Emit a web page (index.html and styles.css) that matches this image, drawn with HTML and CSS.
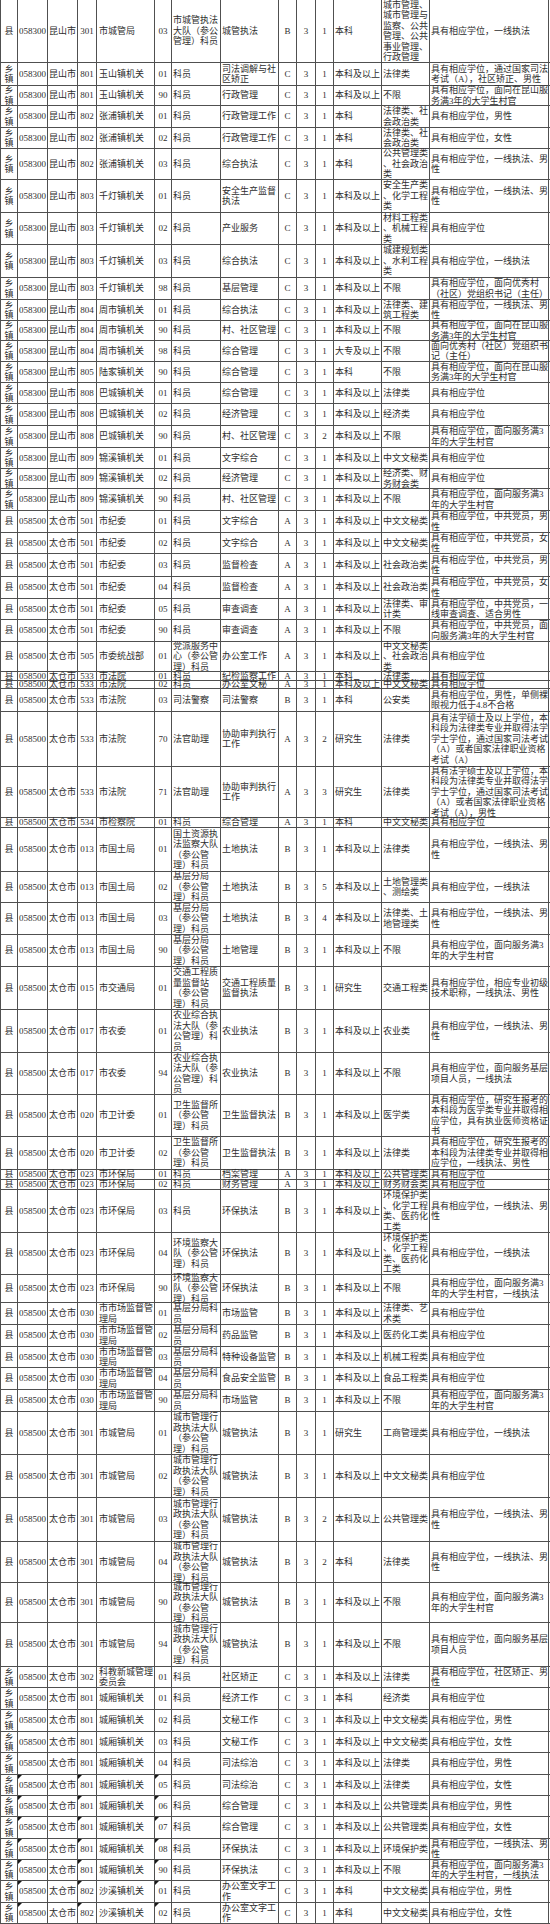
FILE: index.html
```html
<!DOCTYPE html>
<html lang="zh-CN">
<head>
<meta charset="utf-8">
<title>职位表</title>
<link rel="stylesheet" href="styles.css">
</head>
<body>
<div class="sheet">
<div class="r h63"><span>县</span><span>058300</span><span>昆山市</span><span>301</span><span>市城管局</span><span>03</span><span>市城管执法<br>大队（参公<br>管理）科员</span><span>城管执法</span><span>B</span><span>3</span><span>1</span><span>本科</span><span>城市管理、<br>城市管理与<br>监察、公共<br>管理、公共<br>事业管理、<br>行政管理</span><span>具有相应学位，一线执法</span></div>
<div class="r h23"><span>乡<br>镇</span><span>058300</span><span>昆山市</span><span>801</span><span>玉山镇机关</span><span>01</span><span>科员</span><span>司法调解与社<br>区矫正</span><span>C</span><span>3</span><span>1</span><span>本科及以上</span><span>法律类</span><span>具有相应学位，通过国家司法<br>考试（A），社区矫正、男性</span></div>
<div class="r h20"><span>乡<br>镇</span><span>058300</span><span>昆山市</span><span>801</span><span>玉山镇机关</span><span>90</span><span>科员</span><span>行政管理</span><span>C</span><span>3</span><span>1</span><span>本科及以上</span><span>不限</span><span>具有相应学位，面向在昆山服<br>务满3年的大学生村官</span></div>
<div class="r h22"><span>乡<br>镇</span><span>058300</span><span>昆山市</span><span>802</span><span>张浦镇机关</span><span>01</span><span>科员</span><span>行政管理工作</span><span>C</span><span>3</span><span>1</span><span>本科</span><span>法律类、社<br>会政治类</span><span>具有相应学位，男性</span></div>
<div class="r h21"><span>乡<br>镇</span><span>058300</span><span>昆山市</span><span>802</span><span>张浦镇机关</span><span>02</span><span>科员</span><span>行政管理工作</span><span>C</span><span>3</span><span>1</span><span>本科</span><span>法律类、社<br>会政治类</span><span>具有相应学位，女性</span></div>
<div class="r h31"><span>乡<br>镇</span><span>058300</span><span>昆山市</span><span>802</span><span>张浦镇机关</span><span>03</span><span>科员</span><span>综合执法</span><span>C</span><span>3</span><span>1</span><span>本科</span><span>公共管理类<br>、社会政治<br>类</span><span>具有相应学位，一线执法、男<br>性</span></div>
<div class="r h33"><span>乡<br>镇</span><span>058300</span><span>昆山市</span><span>803</span><span>千灯镇机关</span><span>01</span><span>科员</span><span>安全生产监督<br>执法</span><span>C</span><span>3</span><span>1</span><span>本科及以上</span><span>安全生产类<br>、化学工程<br>类</span><span>具有相应学位，一线执法、男<br>性</span></div>
<div class="r h32"><span>乡<br>镇</span><span>058300</span><span>昆山市</span><span>803</span><span>千灯镇机关</span><span>02</span><span>科员</span><span>产业服务</span><span>C</span><span>3</span><span>1</span><span>本科及以上</span><span>材料工程类<br>、机械工程<br>类</span><span>具有相应学位</span></div>
<div class="r h33"><span>乡<br>镇</span><span>058300</span><span>昆山市</span><span>803</span><span>千灯镇机关</span><span>03</span><span>科员</span><span>综合执法</span><span>C</span><span>3</span><span>1</span><span>本科及以上</span><span>城建规划类<br>、水利工程<br>类</span><span>具有相应学位，一线执法</span></div>
<div class="r h22"><span>乡<br>镇</span><span>058300</span><span>昆山市</span><span>803</span><span>千灯镇机关</span><span>98</span><span>科员</span><span>基层管理</span><span>C</span><span>3</span><span>1</span><span>本科及以上</span><span>不限</span><span>具有相应学位，面向优秀村<br>（社区）党组织书记（主任）</span></div>
<div class="r h21"><span>乡<br>镇</span><span>058300</span><span>昆山市</span><span>804</span><span>周市镇机关</span><span>01</span><span>科员</span><span>综合执法</span><span>C</span><span>3</span><span>1</span><span>本科及以上</span><span>法律类、建<br>筑工程类</span><span>具有相应学位，一线执法、男<br>性</span></div>
<div class="r h20"><span>乡<br>镇</span><span>058300</span><span>昆山市</span><span>804</span><span>周市镇机关</span><span>90</span><span>科员</span><span>村、社区管理</span><span>C</span><span>3</span><span>1</span><span>本科及以上</span><span>不限</span><span>具有相应学位，面向在昆山服<br>务满3年的大学生村官</span></div>
<div class="r h21"><span>乡<br>镇</span><span>058300</span><span>昆山市</span><span>804</span><span>周市镇机关</span><span>98</span><span>科员</span><span>综合管理</span><span>C</span><span>3</span><span>1</span><span>大专及以上</span><span>不限</span><span>面向优秀村（社区）党组织书<br>记（主任）</span></div>
<div class="r h21"><span>乡<br>镇</span><span>058300</span><span>昆山市</span><span>805</span><span>陆家镇机关</span><span>90</span><span>科员</span><span>综合管理</span><span>C</span><span>3</span><span>1</span><span>本科</span><span>不限</span><span>具有相应学位，面向在昆山服<br>务满3年的大学生村官</span></div>
<div class="r h21"><span>乡<br>镇</span><span>058300</span><span>昆山市</span><span>808</span><span>巴城镇机关</span><span>01</span><span>科员</span><span>综合管理</span><span>C</span><span>3</span><span>1</span><span>本科及以上</span><span>法律类</span><span>具有相应学位</span></div>
<div class="r h22"><span>乡<br>镇</span><span>058300</span><span>昆山市</span><span>808</span><span>巴城镇机关</span><span>02</span><span>科员</span><span>经济管理</span><span>C</span><span>3</span><span>1</span><span>本科及以上</span><span>经济类</span><span>具有相应学位</span></div>
<div class="r h22"><span>乡<br>镇</span><span>058300</span><span>昆山市</span><span>808</span><span>巴城镇机关</span><span>90</span><span>科员</span><span>村、社区管理</span><span>C</span><span>3</span><span>2</span><span>本科及以上</span><span>不限</span><span>具有相应学位，面向服务满3<br>年的大学生村官</span></div>
<div class="r h21"><span>乡<br>镇</span><span>058300</span><span>昆山市</span><span>809</span><span>锦溪镇机关</span><span>01</span><span>科员</span><span>文字综合</span><span>C</span><span>3</span><span>1</span><span>本科及以上</span><span>中文文秘类</span><span>具有相应学位</span></div>
<div class="r h20"><span>乡<br>镇</span><span>058300</span><span>昆山市</span><span>809</span><span>锦溪镇机关</span><span>02</span><span>科员</span><span>经济管理</span><span>C</span><span>3</span><span>1</span><span>本科及以上</span><span>经济类、财<br>务财会类</span><span>具有相应学位</span></div>
<div class="r h22"><span>乡<br>镇</span><span>058300</span><span>昆山市</span><span>809</span><span>锦溪镇机关</span><span>90</span><span>科员</span><span>村、社区管理</span><span>C</span><span>3</span><span>1</span><span>本科及以上</span><span>不限</span><span>具有相应学位，面向服务满3<br>年的大学生村官</span></div>
<div class="r h22"><span>县</span><span>058500</span><span>太仓市</span><span>501</span><span>市纪委</span><span>01</span><span>科员</span><span>文字综合</span><span>A</span><span>3</span><span>1</span><span>本科及以上</span><span>中文文秘类</span><span>具有相应学位，中共党员，男<br>性</span></div>
<div class="r h21"><span>县</span><span>058500</span><span>太仓市</span><span>501</span><span>市纪委</span><span>02</span><span>科员</span><span>文字综合</span><span>A</span><span>3</span><span>1</span><span>本科及以上</span><span>中文文秘类</span><span>具有相应学位，中共党员，女<br>性</span></div>
<div class="r h23"><span>县</span><span>058500</span><span>太仓市</span><span>501</span><span>市纪委</span><span>03</span><span>科员</span><span>监督检查</span><span>A</span><span>3</span><span>1</span><span>本科及以上</span><span>社会政治类</span><span>具有相应学位，中共党员，男<br>性</span></div>
<div class="r h22"><span>县</span><span>058500</span><span>太仓市</span><span>501</span><span>市纪委</span><span>04</span><span>科员</span><span>监督检查</span><span>A</span><span>3</span><span>1</span><span>本科及以上</span><span>社会政治类</span><span>具有相应学位，中共党员，女<br>性</span></div>
<div class="r h21"><span>县</span><span>058500</span><span>太仓市</span><span>501</span><span>市纪委</span><span>05</span><span>科员</span><span>审查调查</span><span>A</span><span>3</span><span>1</span><span>本科及以上</span><span>法律类、审<br>计类</span><span>具有相应学位，中共党员，一<br>线审查调查、适合男性</span></div>
<div class="r h22"><span>县</span><span>058500</span><span>太仓市</span><span>501</span><span>市纪委</span><span>90</span><span>科员</span><span>审查调查</span><span>A</span><span>3</span><span>1</span><span>本科及以上</span><span>不限</span><span>具有相应学位，中共党员，面<br>向服务满3年的大学生村官</span></div>
<div class="r h30"><span>县</span><span>058500</span><span>太仓市</span><span>505</span><span>市委统战部</span><span>01</span><span>党派服务中<br>心（参公管<br>理）科员</span><span>办公室工作</span><span>A</span><span>3</span><span>1</span><span>本科及以上</span><span>中文文秘类<br>、社会政治<br>类</span><span>具有相应学位</span></div>
<div class="r h9"><span>县</span><span>058500</span><span>太仓市</span><span>533</span><span>市法院</span><span>01</span><span>科员</span><span>纪检监察工作</span><span>A</span><span>3</span><span>1</span><span>本科</span><span>法律类</span><span>具有相应学位</span></div>
<div class="r h8"><span>县</span><span>058500</span><span>太仓市</span><span>533</span><span>市法院</span><span>02</span><span>科员</span><span>办公室文秘</span><span>A</span><span>3</span><span>1</span><span>本科及以上</span><span>中文文秘类</span><span>具有相应学位</span></div>
<div class="r h23"><span>县</span><span>058500</span><span>太仓市</span><span>533</span><span>市法院</span><span>03</span><span>司法警察</span><span>司法警察</span><span>B</span><span>3</span><span>1</span><span>本科</span><span>公安类</span><span>具有相应学位，男性，单侧裸<br>眼视力低于4.8不合格</span></div>
<div class="r h55"><span>县</span><span>058500</span><span>太仓市</span><span>533</span><span>市法院</span><span>70</span><span>法官助理</span><span>协助审判执行<br>工作</span><span>A</span><span>3</span><span>2</span><span>研究生</span><span>法律类</span><span>具有法学硕士及以上学位，本<br>科段为法律类专业并取得法学<br>学士学位，通过国家司法考试<br>（A）或者国家法律职业资格<br>考试（A）</span></div>
<div class="r h51"><span>县</span><span>058500</span><span>太仓市</span><span>533</span><span>市法院</span><span>71</span><span>法官助理</span><span>协助审判执行<br>工作</span><span>A</span><span>3</span><span>3</span><span>研究生</span><span>法律类</span><span>具有法学硕士及以上学位，本<br>科段为法律类专业并取得法学<br>学士学位，通过国家司法考试<br>（A）或者国家法律职业资格<br>考试（A），男性</span></div>
<div class="r h10"><span>县</span><span>058500</span><span>太仓市</span><span>534</span><span>市检察院</span><span>01</span><span>科员</span><span>综合管理</span><span>A</span><span>3</span><span>1</span><span>本科</span><span>中文文秘类</span><span>具有相应学位</span></div>
<div class="r h44"><span>县</span><span>058500</span><span>太仓市</span><span>013</span><span>市国土局</span><span>01</span><span>国土资源执<br>法监察大队<br>（参公管<br>理）科员</span><span>土地执法</span><span>B</span><span>3</span><span>1</span><span>本科及以上</span><span>法律类</span><span>具有相应学位，一线执法、男<br>性</span></div>
<div class="r h31"><span>县</span><span>058500</span><span>太仓市</span><span>013</span><span>市国土局</span><span>02</span><span>基层分局<br>（参公管<br>理）科员</span><span>土地执法</span><span>B</span><span>3</span><span>5</span><span>本科及以上</span><span>土地管理类<br>、测绘类</span><span>具有相应学位，一线执法</span></div>
<div class="r h32"><span>县</span><span>058500</span><span>太仓市</span><span>013</span><span>市国土局</span><span>03</span><span>基层分局<br>（参公管<br>理）科员</span><span>土地执法</span><span>B</span><span>3</span><span>4</span><span>本科及以上</span><span>法律类、土<br>地管理类</span><span>具有相应学位，一线执法、男<br>性</span></div>
<div class="r h32"><span>县</span><span>058500</span><span>太仓市</span><span>013</span><span>市国土局</span><span>90</span><span>基层分局<br>（参公管<br>理）科员</span><span>土地管理</span><span>B</span><span>3</span><span>1</span><span>本科及以上</span><span>不限</span><span>具有相应学位，面向服务满3<br>年的大学生村官</span></div>
<div class="r h43"><span>县</span><span>058500</span><span>太仓市</span><span>015</span><span>市交通局</span><span>01</span><span>交通工程质<br>量监督站<br>（参公管<br>理）科员</span><span>交通工程质量<br>监督执法</span><span>B</span><span>3</span><span>1</span><span>研究生</span><span>交通工程类</span><span>具有相应学位，相应专业初级<br>技术职称，一线执法、男性</span></div>
<div class="r h43"><span>县</span><span>058500</span><span>太仓市</span><span>017</span><span>市农委</span><span>01</span><span>农业综合执<br>法大队（参<br>公管理）科<br>员</span><span>农业执法</span><span>B</span><span>3</span><span>1</span><span>本科及以上</span><span>农业类</span><span>具有相应学位，一线执法、男<br>性</span></div>
<div class="r h42"><span>县</span><span>058500</span><span>太仓市</span><span>017</span><span>市农委</span><span>94</span><span>农业综合执<br>法大队（参<br>公管理）科<br>员</span><span>农业执法</span><span>B</span><span>3</span><span>1</span><span>本科及以上</span><span>不限</span><span>具有相应学位，面向服务基层<br>项目人员，一线执法</span></div>
<div class="r h42"><span>县</span><span>058500</span><span>太仓市</span><span>020</span><span>市卫计委</span><span>01</span><span>卫生监督所<br>（参公管<br>理）科员</span><span>卫生监督执法</span><span>B</span><span>3</span><span>1</span><span>本科及以上</span><span>医学类</span><span>具有相应学位，研究生报考的<br>本科段为医学类专业并取得相<br>应学位，具有执业医师资格证<br>书</span></div>
<div class="r h33"><span>县</span><span>058500</span><span>太仓市</span><span>020</span><span>市卫计委</span><span>02</span><span>卫生监督所<br>（参公管<br>理）科员</span><span>卫生监督执法</span><span>B</span><span>3</span><span>1</span><span>本科及以上</span><span>法律类</span><span>具有相应学位，研究生报考的<br>本科段为法律类专业并取得相<br>应学位，一线执法、男性</span></div>
<div class="r h10"><span>县</span><span>058500</span><span>太仓市</span><span>023</span><span>市环保局</span><span>01</span><span>科员</span><span>档案管理</span><span>A</span><span>3</span><span>1</span><span>本科及以上</span><span>公共管理类</span><span>具有相应学位</span></div>
<div class="r h10"><span>县</span><span>058500</span><span>太仓市</span><span>023</span><span>市环保局</span><span>02</span><span>科员</span><span>财务管理</span><span>A</span><span>3</span><span>1</span><span>本科及以上</span><span>财务财会类</span><span>具有相应学位</span></div>
<div class="r h43"><span>县</span><span>058500</span><span>太仓市</span><span>023</span><span>市环保局</span><span>03</span><span>科员</span><span>环保执法</span><span>B</span><span>3</span><span>1</span><span>本科及以上</span><span>环境保护类<br>、化学工程<br>类、医药化<br>工类</span><span>具有相应学位，一线执法、男<br>性</span></div>
<div class="r h42"><span>县</span><span>058500</span><span>太仓市</span><span>023</span><span>市环保局</span><span>04</span><span>环境监察大<br>队（参公管<br>理）科员</span><span>环保执法</span><span>B</span><span>3</span><span>1</span><span>本科及以上</span><span>环境保护类<br>、化学工程<br>类、医药化<br>工类</span><span>具有相应学位，一线执法</span></div>
<div class="r h28"><span>县</span><span>058500</span><span>太仓市</span><span>023</span><span>市环保局</span><span>90</span><span>环境监察大<br>队（参公管<br>理）科员</span><span>环保执法</span><span>B</span><span>3</span><span>1</span><span>本科及以上</span><span>不限</span><span>具有相应学位，面向服务满3<br>年的大学生村官，一线执法</span></div>
<div class="r h22"><span>县</span><span>058500</span><span>太仓市</span><span>030</span><span>市市场监督管<br>理局</span><span>01</span><span>基层分局科<br>员</span><span>市场监管</span><span>B</span><span>3</span><span>1</span><span>本科及以上</span><span>法律类、艺<br>术类</span><span>具有相应学位</span></div>
<div class="r h22"><span>县</span><span>058500</span><span>太仓市</span><span>030</span><span>市市场监督管<br>理局</span><span>02</span><span>基层分局科<br>员</span><span>药品监管</span><span>B</span><span>3</span><span>1</span><span>本科及以上</span><span>医药化工类</span><span>具有相应学位</span></div>
<div class="r h21"><span>县</span><span>058500</span><span>太仓市</span><span>030</span><span>市市场监督管<br>理局</span><span>03</span><span>基层分局科<br>员</span><span>特种设备监管</span><span>B</span><span>3</span><span>1</span><span>本科及以上</span><span>机械工程类</span><span>具有相应学位</span></div>
<div class="r h22"><span>县</span><span>058500</span><span>太仓市</span><span>030</span><span>市市场监督管<br>理局</span><span>04</span><span>基层分局科<br>员</span><span>食品安全监管</span><span>B</span><span>3</span><span>1</span><span>本科及以上</span><span>食品工程类</span><span>具有相应学位</span></div>
<div class="r h22"><span>县</span><span>058500</span><span>太仓市</span><span>030</span><span>市市场监督管<br>理局</span><span>90</span><span>基层分局科<br>员</span><span>市场监管</span><span>B</span><span>3</span><span>1</span><span>本科及以上</span><span>不限</span><span>具有相应学位，面向服务满3<br>年的大学生村官</span></div>
<div class="r h43"><span>县</span><span>058500</span><span>太仓市</span><span>301</span><span>市城管局</span><span>01</span><span>城市管理行<br>政执法大队<br>（参公管<br>理）科员</span><span>城管执法</span><span>B</span><span>3</span><span>1</span><span>研究生</span><span>工商管理类</span><span>具有相应学位，一线执法</span></div>
<div class="r h43"><span>县</span><span>058500</span><span>太仓市</span><span>301</span><span>市城管局</span><span>02</span><span>城市管理行<br>政执法大队<br>（参公管<br>理）科员</span><span>城管执法</span><span>B</span><span>3</span><span>1</span><span>本科及以上</span><span>中文文秘类</span><span>具有相应学位</span></div>
<div class="r h44"><span>县</span><span>058500</span><span>太仓市</span><span>301</span><span>市城管局</span><span>03</span><span>城市管理行<br>政执法大队<br>（参公管<br>理）科员</span><span>城管执法</span><span>B</span><span>3</span><span>2</span><span>本科及以上</span><span>公共管理类</span><span>具有相应学位，一线执法、男<br>性</span></div>
<div class="r h41"><span>县</span><span>058500</span><span>太仓市</span><span>301</span><span>市城管局</span><span>04</span><span>城市管理行<br>政执法大队<br>（参公管<br>理）科员</span><span>城管执法</span><span>B</span><span>3</span><span>2</span><span>本科</span><span>法律类</span><span>具有相应学位，一线执法、男<br>性</span></div>
<div class="r h40"><span>县</span><span>058500</span><span>太仓市</span><span>301</span><span>市城管局</span><span>90</span><span>城市管理行<br>政执法大队<br>（参公管<br>理）科员</span><span>城管执法</span><span>B</span><span>3</span><span>1</span><span>本科及以上</span><span>不限</span><span>具有相应学位，面向服务满3<br>年的大学生村官</span></div>
<div class="r h44"><span>县</span><span>058500</span><span>太仓市</span><span>301</span><span>市城管局</span><span>94</span><span>城市管理行<br>政执法大队<br>（参公管<br>理）科员</span><span>城管执法</span><span>B</span><span>3</span><span>1</span><span>本科及以上</span><span>不限</span><span>具有相应学位，面向服务基层<br>项目人员</span></div>
<div class="r h21"><span>乡<br>镇</span><span>058500</span><span>太仓市</span><span>302</span><span>科教新城管理<br>委员会</span><span>01</span><span>科员</span><span>社区矫正</span><span>C</span><span>3</span><span>1</span><span>本科及以上</span><span>法律类</span><span>具有相应学位，社区矫正、男<br>性</span></div>
<div class="r h22"><span>乡<br>镇</span><span>058500</span><span>太仓市</span><span>801</span><span>城厢镇机关</span><span>01</span><span>科员</span><span>经济工作</span><span>C</span><span>3</span><span>1</span><span>本科</span><span>经济类</span><span>具有相应学位</span></div>
<div class="r h22"><span>乡<br>镇</span><span>058500</span><span>太仓市</span><span>801</span><span>城厢镇机关</span><span>02</span><span>科员</span><span>文秘工作</span><span>C</span><span>3</span><span>1</span><span>本科及以上</span><span>中文文秘类</span><span>具有相应学位，男性</span></div>
<div class="r h21"><span>乡<br>镇</span><span>058500</span><span>太仓市</span><span>801</span><span>城厢镇机关</span><span>03</span><span>科员</span><span>文秘工作</span><span>C</span><span>3</span><span>1</span><span>本科及以上</span><span>中文文秘类</span><span>具有相应学位，女性</span></div>
<div class="r h22"><span>乡<br>镇</span><span>058500</span><span>太仓市</span><span>801</span><span>城厢镇机关</span><span>04</span><span>科员</span><span>司法综治</span><span>C</span><span>3</span><span>1</span><span>本科及以上</span><span>法律类</span><span>具有相应学位，男性</span></div>
<div class="r h21 mk"><span>乡<br>镇</span><span>058500</span><span>太仓市</span><span>801</span><span>城厢镇机关</span><span>05</span><span>科员</span><span>司法综治</span><span>C</span><span>3</span><span>1</span><span>本科及以上</span><span>法律类</span><span>具有相应学位，女性</span></div>
<div class="r h21 mk"><span>乡<br>镇</span><span>058500</span><span>太仓市</span><span>801</span><span>城厢镇机关</span><span>06</span><span>科员</span><span>综合管理</span><span>C</span><span>3</span><span>1</span><span>本科及以上</span><span>公共管理类</span><span>具有相应学位，男性</span></div>
<div class="r h22 mk"><span>乡<br>镇</span><span>058500</span><span>太仓市</span><span>801</span><span>城厢镇机关</span><span>07</span><span>科员</span><span>综合管理</span><span>C</span><span>3</span><span>1</span><span>本科及以上</span><span>公共管理类</span><span>具有相应学位，女性</span></div>
<div class="r h21 mk"><span>乡<br>镇</span><span>058500</span><span>太仓市</span><span>801</span><span>城厢镇机关</span><span>08</span><span>科员</span><span>环保执法</span><span>C</span><span>3</span><span>1</span><span>本科及以上</span><span>环境保护类</span><span>具有相应学位，一线执法、男<br>性</span></div>
<div class="r h21 mk"><span>乡<br>镇</span><span>058500</span><span>太仓市</span><span>801</span><span>城厢镇机关</span><span>90</span><span>科员</span><span>环保执法</span><span>C</span><span>3</span><span>1</span><span>本科及以上</span><span>不限</span><span>具有相应学位，面向服务满3<br>年的大学生村官，一线执法</span></div>
<div class="r h22 mk"><span>乡<br>镇</span><span>058500</span><span>太仓市</span><span>802</span><span>沙溪镇机关</span><span>01</span><span>科员</span><span>办公室文字工<br>作</span><span>C</span><span>3</span><span>1</span><span>本科</span><span>中文文秘类</span><span>具有相应学位，男性</span></div>
<div class="r h21 mk"><span>乡<br>镇</span><span>058500</span><span>太仓市</span><span>802</span><span>沙溪镇机关</span><span>02</span><span>科员</span><span>办公室文字工<br>作</span><span>C</span><span>3</span><span>1</span><span>本科</span><span>中文文秘类</span><span>具有相应学位，女性</span></div>
</div>
</body>
</html>
```

FILE: styles.css
```css
html, body {
  margin: 0;
  padding: 0;
  background: #ffffff;
}

.sheet {
  width: 549px;
  border-left: 1px solid #505050;
  font-family: "Liberation Serif", "Noto Sans CJK SC", serif;
  font-size: 9px;
  line-height: 10.5px;
  color: #2e2e2e;
}

.r {
  display: grid;
  grid-template-columns: 17px 30px 30px 19px 58px 17px 49px 58px 18px 19px 18px 48px 48px 119px;
  grid-template-rows: 100%;
  box-sizing: border-box;
  border-bottom: 1px solid #505050;
}

.r > span {
  box-sizing: border-box;
  display: flex;
  align-items: center;
  min-height: 0;
  padding-left: 1px;
  border-right: 1px solid #505050;
  white-space: nowrap;
  overflow: visible;
  position: relative;
}

.r > span:nth-child(1),
.r > span:nth-child(4),
.r > span:nth-child(6),
.r > span:nth-child(9),
.r > span:nth-child(10),
.r > span:nth-child(11) {
  justify-content: center;
  text-align: center;
  padding-left: 0;
}

.r > span:nth-child(5) {
  padding-left: 2px;
}

.mk > span:nth-child(2)::before,
.mk > span:nth-child(4)::before,
.mk > span:nth-child(6)::before {
  content: "";
  position: absolute;
  top: 0;
  left: 0;
  border-top: 4px solid #1a1a1a;
  border-right: 4px solid transparent;
}

.h8 { height: 8px; }
.h9 { height: 9px; }
.h10 { height: 10px; }
.h20 { height: 20px; }
.h21 { height: 21px; }
.h22 { height: 22px; }
.h23 { height: 23px; }
.h28 { height: 28px; }
.h30 { height: 30px; }
.h31 { height: 31px; }
.h32 { height: 32px; }
.h33 { height: 33px; }
.h40 { height: 40px; }
.h41 { height: 41px; }
.h42 { height: 42px; }
.h43 { height: 43px; }
.h44 { height: 44px; }
.h51 { height: 51px; }
.h55 { height: 55px; }
.h63 { height: 63px; }
```
